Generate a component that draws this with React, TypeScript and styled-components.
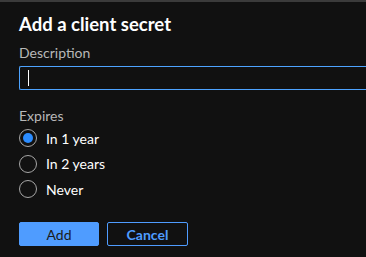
import styled, { createGlobalStyle } from "styled-components";

const GlobalStyle = createGlobalStyle`
  html, body {
    margin: 0;
    padding: 0;
    background: #111111;
    overflow: hidden;
  }
  body {
    font-family: Lato, "Noto Sans", sans-serif;
    color: #ffffff;
  }
`;

const Panel = styled.div`
  border-top: 2px solid #3b3b3b;
  height: 255px;
  padding: 10px 0 0 19px;
  box-sizing: border-box;
  overflow: hidden;
`;

const Title = styled.h2`
  margin: 0 0 7px;
  font-size: 18.5px;
  line-height: 24px;
  font-weight: 700;
  color: #ffffff;
`;

const Label = styled.label`
  display: block;
  font-size: 14px;
  line-height: 20px;
  color: #b8b8b8;
  margin-bottom: 3px;
`;

const Input = styled.div`
  width: 100%;
  height: 24px;
  box-sizing: border-box;
  border: 1px solid #4da3ff;
  border-right: none;
  border-radius: 2px 0 0 2px;
  display: flex;
  align-items: center;
  padding-left: 8px;
  margin-bottom: 16px;
`;

const Caret = styled.span`
  width: 1px;
  height: 16px;
  background: #ffffff;
`;

const Group = styled.div`
  display: flex;
  flex-direction: column;
  gap: 5.5px;
  margin-top: -1px;
`;

const Option = styled.div`
  display: flex;
  align-items: center;
  gap: 9px;
  height: 20px;
  font-size: 14px;
  color: #ffffff;
`;

const Circle = styled.span<{ $checked?: boolean }>`
  width: 18px;
  height: 18px;
  box-sizing: border-box;
  border-radius: 50%;
  border: 1px solid #a6a6a6;
  display: flex;
  align-items: center;
  justify-content: center;
  &::after {
    content: "";
    width: 10px;
    height: 10px;
    border-radius: 50%;
    background: ${(p) => (p.$checked ? "#2b8cff" : "transparent")};
  }
`;

const Actions = styled.div`
  display: flex;
  gap: 8px;
  margin-top: 23px;
`;

const Button = styled.button<{ $primary?: boolean }>`
  width: ${(p) => (p.$primary ? 80 : 81)}px;
  height: 24px;
  box-sizing: border-box;
  border-radius: 2px;
  font-family: inherit;
  font-size: 14px;
  padding: 0;
  border: 1px solid #4f9cff;
  background: ${(p) => (p.$primary ? "#4f9cff" : "transparent")};
  color: ${(p) => (p.$primary ? "#1b1b1b" : "#4f9cff")};
  font-weight: ${(p) => (p.$primary ? 400 : 700)};
`;

const options = [
  { label: "In 1 year", checked: true },
  { label: "In 2 years", checked: false },
  { label: "Never", checked: false },
];

export default function App() {
  return (
    <>
      <GlobalStyle />
      <Panel>
        <Title>Add a client secret</Title>
        <Label>Description</Label>
        <Input>
          <Caret />
        </Input>
        <Label>Expires</Label>
        <Group>
          {options.map((o) => (
            <Option key={o.label}>
              <Circle $checked={o.checked} />
              {o.label}
            </Option>
          ))}
        </Group>
        <Actions>
          <Button $primary>Add</Button>
          <Button>Cancel</Button>
        </Actions>
      </Panel>
    </>
  );
}
